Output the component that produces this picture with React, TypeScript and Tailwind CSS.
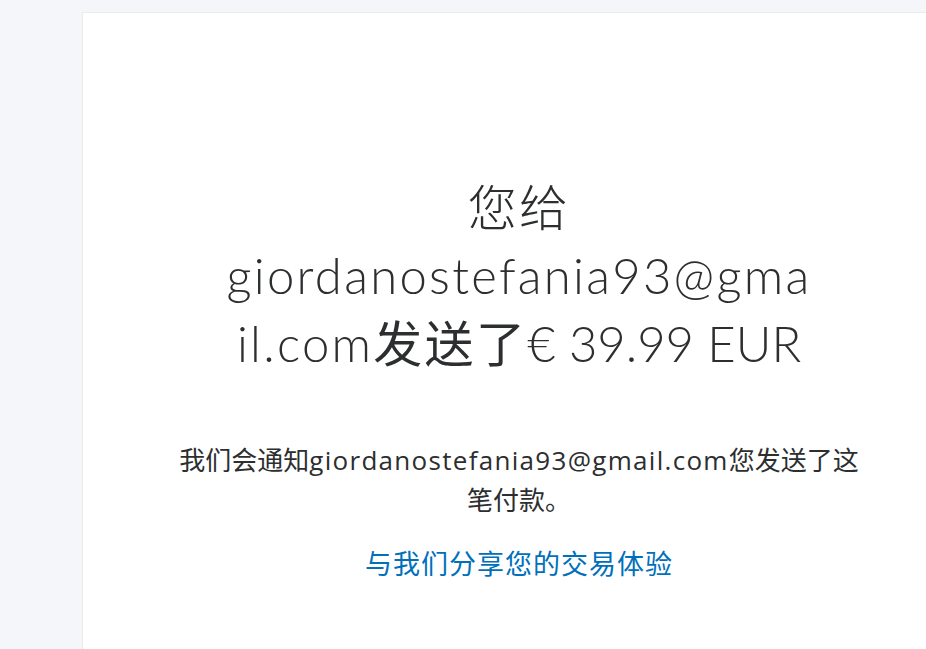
export default function App() {
  const email = "giordanostefania93@gmail.com";

  return (
    <div className="h-[649px] w-full overflow-hidden bg-[#f5f6fa]">
      <div className="ml-[82px] mt-3 min-h-[700px] w-[874px] border border-[#ebebeb] bg-white pt-[160px]">
        <div className="flex flex-col items-center text-center text-[#2c2e2f]">
          <h1 className="w-[596px] break-words text-[49px] leading-[68px] font-light tracking-[2.3px] [font-family:Lato,'Noto_Sans_CJK_SC',sans-serif]">
            您给{email}
            <span className="font-normal">发送了</span>
            <span className="tracking-normal">€ 39.99 EUR</span>
          </h1>

          <p className="mt-[63px] w-[700px] text-[26px] leading-[40px] [font-family:'Open_Sans','Noto_Sans_CJK_SC',sans-serif]">
            我们会通知<span className="tracking-[1.3px]">{email}</span>您发送了这笔付款。
          </p>

          <a
            href="#"
            className="mt-[24px] text-[27px] leading-[40px] tracking-[1px] text-[#0070ba] [font-family:'Open_Sans','Noto_Sans_CJK_SC',sans-serif]"
          >
            与我们分享您的交易体验
          </a>
        </div>
      </div>
    </div>
  );
}
